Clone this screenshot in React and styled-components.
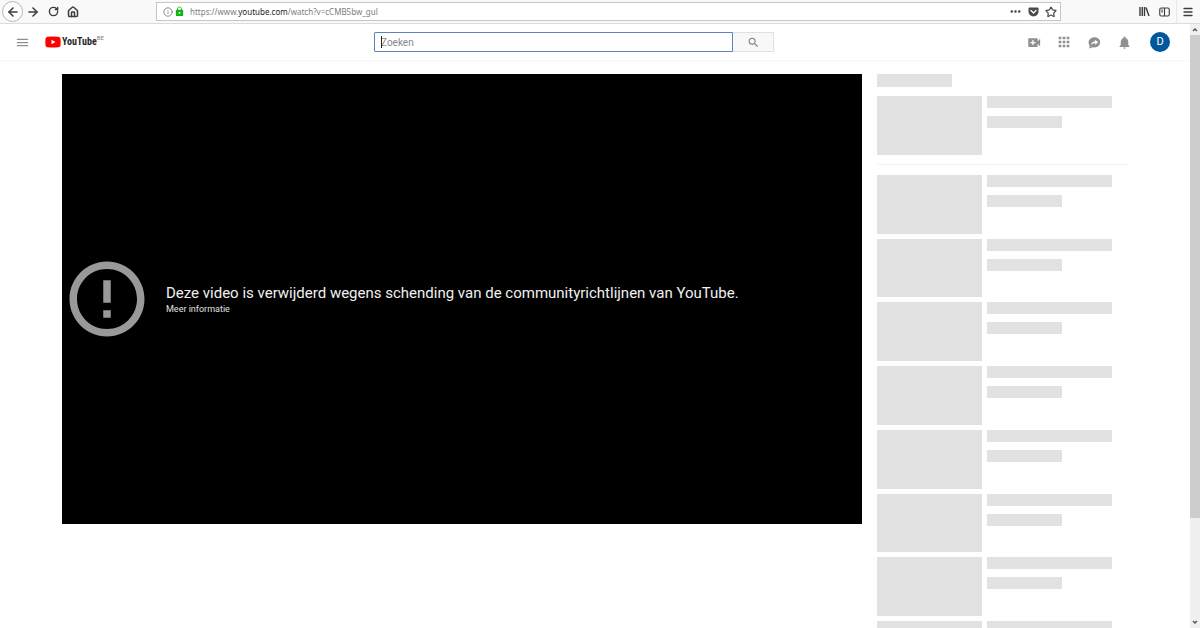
import React from "react";
import styled, { createGlobalStyle, css } from "styled-components";
import { ArrowLeft, ArrowRight, RotateCw, House, Info, Star, Menu } from "lucide-react";
import {
  MdApps,
  MdErrorOutline,
  MdLock,
  MdMenu,
  MdMoreHoriz,
  MdNotifications,
  MdSearch,
} from "react-icons/md";

const GlobalStyle = createGlobalStyle`
  *, *::before, *::after { box-sizing: border-box; }
  body {
    margin: 0;
    background: #fff;
    font-family: Roboto, "Liberation Sans", sans-serif;
  }
  button, input { font: inherit; }
  svg { display: block; flex: none; }
`;

const Window = styled.div`
  display: flex;
  flex-direction: column;
  height: 100vh;
  overflow: hidden;
`;

/* Browser toolbar */

const Toolbar = styled.div`
  display: flex;
  align-items: center;
  flex: none;
  height: 24px;
  padding: 0 2px;
  background: #f9f9fa;
  border-bottom: 1px solid #dcdcde;
  color: #3c3c3f;
`;

const ToolGroup = styled.div`
  display: flex;
  align-items: center;
`;

const ToolButton = styled.button`
  display: flex;
  align-items: center;
  justify-content: center;
  width: 20px;
  height: 20px;
  padding: 0;
  border: 0;
  background: none;
  color: inherit;
  ${(p) =>
    p.$round &&
    css`
      width: 21px;
      height: 21px;
      border: 1px solid #b4b4b6;
      border-radius: 50%;
      background: #fdfdfd;
    `}
`;

const AddressBar = styled.div`
  display: flex;
  align-items: center;
  flex: 1;
  height: 19px;
  margin: 0 73px;
  padding: 0 1px 0 5px;
  border: 1px solid #c6c6c8;
  background: #fff;
`;

const AddressIcon = styled.button`
  display: flex;
  align-items: center;
  justify-content: center;
  width: ${(p) => p.$width}px;
  height: 16px;
  padding: 0;
  border: 0;
  background: none;
  color: ${(p) => p.$color || "#4a4a4e"};
`;

const Address = styled.div`
  flex: 1;
  padding-left: 5px;
  color: #7c7c80;
  font-family: "Noto Sans", "Open Sans", sans-serif;
  font-size: 8px;
  line-height: 16px;
  white-space: nowrap;

  b {
    color: #1c1c1e;
    font-weight: 400;
  }
`;

const ToolDivider = styled.span`
  width: 1px;
  height: 23px;
  margin: 0 1px 0 2px;
  background: #e8e8ea;
`;

/* Page */

const Viewport = styled.div`
  display: flex;
  flex: 1;
  min-height: 0;
`;

const Page = styled.div`
  flex: 1;
  min-width: 0;
  overflow: hidden;
`;

const Masthead = styled.header`
  display: flex;
  align-items: center;
  justify-content: space-between;
  height: 36px;
  padding: 0 20px 0 17px;
  background: #fff;
  box-shadow: 0 1px 2px #f4f4f4;
`;

const MastheadStart = styled.div`
  display: flex;
  align-items: center;
  min-width: 105px;
`;

const MastheadEnd = styled.div`
  display: flex;
  align-items: center;
  gap: 14px;
`;

const IconButton = styled.button`
  display: flex;
  align-items: center;
  justify-content: center;
  width: ${(p) => p.$width || 16}px;
  height: 16px;
  padding: 0;
  border: 0;
  background: none;
  color: #909090;
`;

const Logo = styled.a`
  display: flex;
  align-items: center;
  margin-left: 17px;
  color: #282828;
  text-decoration: none;
`;

const Wordmark = styled.span`
  margin-left: 1px;
  font-family: "Roboto Condensed", "Open Sans Condensed", "Liberation Sans Narrow", sans-serif;
  font-size: 10px;
  font-weight: 700;
  line-height: 16px;
`;

const Country = styled.span`
  align-self: flex-start;
  color: #808080;
  font-size: 6px;
  line-height: 8px;
`;

const SearchForm = styled.form`
  position: relative;
  display: flex;
  width: 400px;
  height: 20px;

  &::before {
    content: "";
    position: absolute;
    top: 4px;
    left: 7px;
    width: 1px;
    height: 12px;
    background: #222;
  }
`;

const SearchInput = styled.input`
  flex: 1;
  min-width: 0;
  padding: 0 6px;
  border: 1px solid #5c85c0;
  border-radius: 1px 0 0 1px;
  outline: 0;
  background: #fff;
  color: #111;
  font-size: 10px;

  &::placeholder {
    color: #888;
    opacity: 1;
  }
`;

const SearchButton = styled.button`
  display: flex;
  align-items: center;
  justify-content: center;
  width: 41px;
  padding: 0;
  border: 1px solid #e0e0e0;
  border-left: 0;
  background: #f8f8f8;
  color: #808080;
`;

const Avatar = styled.button`
  width: 20px;
  height: 20px;
  margin-left: 4px;
  padding: 0;
  border: 0;
  border-radius: 50%;
  background: #01579b;
  color: #fff;
  font-size: 11px;
  line-height: 20px;
`;

const Columns = styled.main`
  display: flex;
  align-items: flex-start;
  gap: 15px;
  max-width: 1066px;
  margin: 0 auto;
  padding-top: 14px;
`;

const Player = styled.section`
  display: flex;
  align-items: center;
  flex: 1;
  gap: 14px;
  aspect-ratio: 16 / 9;
  background: #000;
`;

const Message = styled.div`
  display: flex;
  flex-direction: column;
  align-items: flex-start;
  padding-top: 2px;
`;

const Reason = styled.h1`
  margin: 0;
  color: #f0f0f0;
  font-size: 15px;
  font-weight: 400;
  line-height: 18px;
`;

const MoreLink = styled.a`
  color: #e0e0e0;
  font-size: 9px;
  line-height: 14px;
  text-decoration: none;
`;

const Related = styled.aside`
  flex: none;
  width: 251px;
`;

const Bar = styled.div`
  width: ${(p) => (p.$long ? 125 : 75)}px;
  height: ${(p) => (p.$heading ? 13 : 12)}px;
  background: #e2e2e2;
`;

const CardList = styled.div`
  display: flex;
  flex-direction: column;
  gap: 5px;
  margin-top: 9px;
`;

const Card = styled.div`
  display: flex;
  gap: 5px;
`;

const Thumbnail = styled.div`
  width: 105px;
  aspect-ratio: 168 / 94;
  background: #e2e2e2;
`;

const CardText = styled.div`
  display: flex;
  flex-direction: column;
  gap: 8px;
`;

const Rule = styled.hr`
  height: 1px;
  margin: 9px 0 10px;
  border: 0;
  background: #f0f0f0;
`;

/* Scrollbar */

const Scrollbar = styled.div`
  display: flex;
  flex-direction: column;
  align-items: stretch;
  flex: none;
  width: 10px;
  background: #f0f0f0;
`;

const ScrollArrow = styled.button`
  display: flex;
  align-items: center;
  justify-content: center;
  height: 11px;
  padding: 0;
  border: 0;
  background: none;
  color: #505050;
`;

const ScrollTrack = styled.div`
  flex: 1;
`;

const ScrollThumb = styled.div`
  height: 83%;
  background: #cdcdcd;
`;

const PocketIcon = () => (
  <svg width="11" height="10" viewBox="0 0 22 20">
    <path d="M3 1h16a2 2 0 0 1 2 2v6a10 10 0 0 1-20 0V3a2 2 0 0 1 2-2z" fill="currentColor" />
    <path d="M6 7l5 5 5-5" fill="none" stroke="#fff" strokeWidth="2.6" strokeLinecap="round" strokeLinejoin="round" />
  </svg>
);

const LibraryIcon = () => (
  <svg width="11" height="11" viewBox="0 0 22 22" fill="none" stroke="currentColor" strokeWidth="2.8">
    <path d="M2 2v18M6.500 2v18M11 2v18M14 3l6 17" />
  </svg>
);

const SidebarIcon = () => (
  <svg width="11" height="10" viewBox="0 0 22 20" fill="none" stroke="currentColor" strokeWidth="2.2">
    <rect x="1.500" y="2" width="19" height="16" rx="3" />
    <path d="M11 2v16M4.500 6h3.500M4.500 9.500h3.500" />
  </svg>
);

const PlayLogo = () => (
  <svg width="16" height="12" viewBox="0 0 32 24">
    <path
      d="M5 1.500Q16 .3 27 1.500 30.500 2 31 5.500 31.700 12 31 18.500 30.500 22 27 22.500 16 23.700 5 22.500 1.500 22 1 18.500.3 12 1 5.500 1.500 2 5 1.500z"
      fill="#f00"
    />
    <path d="M13 7.500v9l8-4.500z" fill="#fff" />
  </svg>
);

const CreateIcon = () => (
  <svg width="15" height="15" viewBox="0 0 24 24" fill="currentColor" fillRule="evenodd">
    <path d="M3 5h13a1 1 0 0 1 1 1v4l4-4v12l-4-4v4a1 1 0 0 1-1 1H3a1 1 0 0 1-1-1V6a1 1 0 0 1 1-1zM8.500 8v3h-3v2h3v3h2v-3h3v-2h-3V8z" />
  </svg>
);

const ShareBubbleIcon = () => (
  <svg width="15" height="15" viewBox="0 0 24 24">
    <path
      d="M12 3.500c5 0 9 3.600 9 8.200s-4 8.300-9 8.300c-1 0-2-.1-3-.4L4 21.500V17c-1-1.500-1.500-3.300-1.500-5.300C2.500 7.100 7 3.500 12 3.500z"
      fill="currentColor"
    />
    <path d="M13 7.500l5 4-5 4v-2.400c-3 0-5 .8-6.500 2.700.5-3.300 2.500-5.600 6.500-6z" fill="#fff" />
  </svg>
);

const Chevron = ({ d }) => (
  <svg width="6" height="5" viewBox="0 0 6 5" fill="none" stroke="currentColor" strokeWidth="1.400">
    <path d={d} />
  </svg>
);

const SkeletonCard = () => (
  <Card>
    <Thumbnail />
    <CardText>
      <Bar $long />
      <Bar />
    </CardText>
  </Card>
);

export default function App() {
  return (
    <Window>
      <GlobalStyle />
      <Toolbar>
        <ToolGroup>
          <ToolButton $round aria-label="Vorige">
            <ArrowLeft size={14} strokeWidth={2.6} />
          </ToolButton>
          <ToolButton aria-label="Volgende">
            <ArrowRight size={14} strokeWidth={2.6} />
          </ToolButton>
          <ToolButton aria-label="Vernieuwen">
            <RotateCw size={11} strokeWidth={3} />
          </ToolButton>
          <ToolButton aria-label="Startpagina">
            <House size={12} strokeWidth={3} />
          </ToolButton>
        </ToolGroup>
        <AddressBar>
          <AddressIcon $width={11} $color="#77777b" aria-label="Site-informatie">
            <Info size={10} strokeWidth={2} />
          </AddressIcon>
          <AddressIcon $width={12} $color="#12b312" aria-label="Beveiligde verbinding">
            <MdLock size={11} />
          </AddressIcon>
          <Address>
            https://www.<b>youtube.com</b>/watch?v=cCMB5bw_gul
          </Address>
          <AddressIcon $width={18} aria-label="Pagina-acties">
            <MdMoreHoriz size={15} />
          </AddressIcon>
          <AddressIcon $width={18} aria-label="Opslaan in Pocket">
            <PocketIcon />
          </AddressIcon>
          <AddressIcon $width={17} aria-label="Bladwijzer">
            <Star size={12} strokeWidth={2.4} />
          </AddressIcon>
        </AddressBar>
        <ToolGroup>
          <ToolButton aria-label="Bibliotheek">
            <LibraryIcon />
          </ToolButton>
          <ToolButton aria-label="Zijbalk">
            <SidebarIcon />
          </ToolButton>
          <ToolDivider />
          <ToolButton aria-label="Menu">
            <Menu size={12} strokeWidth={2.6} />
          </ToolButton>
        </ToolGroup>
      </Toolbar>

      <Viewport>
        <Page>
          <Masthead>
            <MastheadStart>
              <IconButton $width={11} aria-label="Gids">
                <MdMenu size={15} />
              </IconButton>
              <Logo href="#">
                <PlayLogo />
                <Wordmark>YouTube</Wordmark>
                <Country>BE</Country>
              </Logo>
            </MastheadStart>
            <SearchForm role="search">
              <SearchInput type="text" placeholder="Zoeken" aria-label="Zoeken" />
              <SearchButton type="button" aria-label="Zoekopdracht starten">
                <MdSearch size={13} />
              </SearchButton>
            </SearchForm>
            <MastheadEnd>
              <IconButton aria-label="Maken">
                <CreateIcon />
              </IconButton>
              <IconButton aria-label="Apps">
                <MdApps size={16} />
              </IconButton>
              <IconButton aria-label="Berichten">
                <ShareBubbleIcon />
              </IconButton>
              <IconButton aria-label="Meldingen">
                <MdNotifications size={15} />
              </IconButton>
              <Avatar aria-label="Account">D</Avatar>
            </MastheadEnd>
          </Masthead>

          <Columns>
            <Player>
              <MdErrorOutline size={90} color="#999" />
              <Message>
                <Reason>
                  Deze video is verwijderd wegens schending van de communityrichtlijnen van YouTube.
                </Reason>
                <MoreLink href="#">Meer informatie</MoreLink>
              </Message>
            </Player>
            <Related>
              <Bar $heading />
              <CardList>
                <SkeletonCard />
              </CardList>
              <Rule />
              <CardList>
                {Array.from({ length: 8 }, (_, i) => (
                  <SkeletonCard key={i} />
                ))}
              </CardList>
            </Related>
          </Columns>
        </Page>
        <Scrollbar>
          <ScrollArrow aria-label="Omhoog">
            <Chevron d="M1 4l2-2 2 2" />
          </ScrollArrow>
          <ScrollTrack>
            <ScrollThumb />
          </ScrollTrack>
          <ScrollArrow aria-label="Omlaag">
            <Chevron d="M1 1l2 2 2-2" />
          </ScrollArrow>
        </Scrollbar>
      </Viewport>
    </Window>
  );
}
